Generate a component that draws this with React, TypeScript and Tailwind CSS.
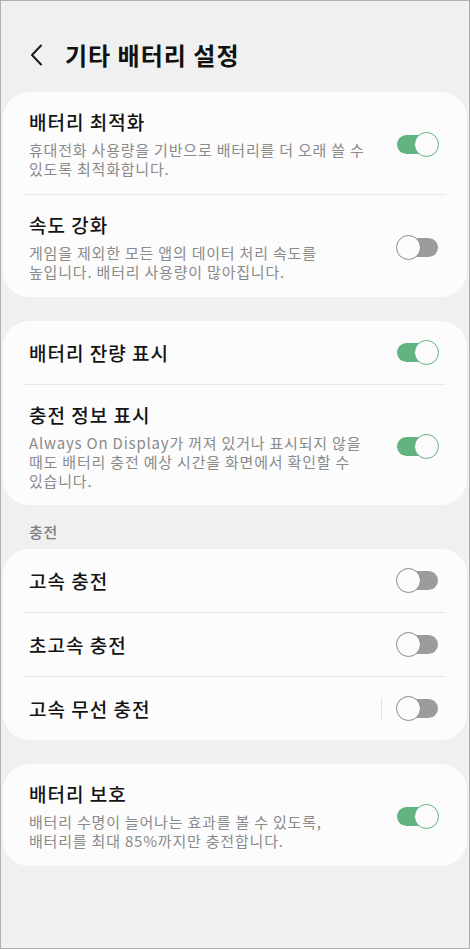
import React from "react";

const FONT = { fontFamily: '"Noto Sans CJK KR", "Noto Sans", sans-serif' };

const Toggle: React.FC<{ on: boolean }> = ({ on }) => (
  <div className="relative w-[43px] h-[25px] shrink-0">
    <div
      className={`absolute top-[3px] bottom-[3px] left-[1px] right-[1px] rounded-full ${
        on ? "bg-[#63b37f]" : "bg-[#9c9c9c]"
      }`}
    />
    <div
      className={`absolute top-0 w-[25px] h-[25px] rounded-full bg-[#fbfbfb] border-[1.5px] ${
        on ? "right-0 border-[#63b37f]" : "left-0 border-[#8a8a8a]"
      }`}
    />
  </div>
);

const Divider = () => <div className="mx-[21px] h-px bg-[#e8e8e8]" />;

const titleCls = "text-[19px] leading-[24px] tracking-[1px] font-medium text-[#141414]";

const Row: React.FC<{ title: string; desc?: string; on: boolean; sep?: boolean; tight?: boolean }> = ({
  title,
  desc,
  on,
  sep,
  tight,
}) => {
  if (!desc) {
    return (
      <div className="flex items-center h-[63px] pl-[26px] pr-[28px]">
        <div className={`flex-1 ${titleCls}`}>{title}</div>
        {sep && <div className="w-px h-[22px] bg-[#e2e2e2] mr-[14px]" />}
        <Toggle on={on} />
      </div>
    );
  }
  return (
    <div className={`flex items-center pt-[18px] pl-[26px] pr-[28px] ${tight ? "pb-[15px]" : "pb-[16px]"}`}>
      <div className="flex-1 min-w-0 pr-[22px]">
        <div className={titleCls}>{title}</div>
        <div className="mt-[6px] text-[15px] leading-[19px] tracking-[0.8px] text-[#8a8a8a] break-keep">
          {desc}
        </div>
      </div>
      <Toggle on={on} />
    </div>
  );
};

const Card: React.FC<{ children: React.ReactNode }> = ({ children }) => (
  <div className="mx-[2px] rounded-[26px] bg-[#fcfcfc]">{children}</div>
);

export default function App() {
  return (
    <div
      className="w-[470px] h-[949px] border border-[#b0b0b0] bg-[#f0f0f0] overflow-hidden"
      style={FONT}
    >
      {/* header */}
      <div className="flex items-center h-[91px] pt-[16px] pl-[28px]">
        <svg width="16" height="22" viewBox="0 0 16 22" className="shrink-0">
          <path d="M12 1.5 L3 11 L12 20.5" fill="none" stroke="#1a1a1a" strokeWidth="2" strokeLinecap="round" strokeLinejoin="round" />
        </svg>
        <h1 className="ml-[20px] text-[24px] leading-[30px] tracking-[1px] font-bold text-[#111]">기타 배터리 설정</h1>
      </div>

      <Card>
        <Row
          title="배터리 최적화"
          desc="휴대전화 사용량을 기반으로 배터리를 더 오래 쓸 수 있도록 최적화합니다."
          on
        />
        <Divider />
        <Row
          title="속도 강화"
          desc="게임을 제외한 모든 앱의 데이터 처리 속도를 높입니다. 배터리 사용량이 많아집니다."
          on={false}
        />
      </Card>

      <div className="h-[24px]" />

      <Card>
        <Row title="배터리 잔량 표시" on />
        <Divider />
        <Row
          title="충전 정보 표시"
          desc="Always On Display가 꺼져 있거나 표시되지 않을 때도 배터리 충전 예상 시간을 화면에서 확인할 수 있습니다."
          on
          tight
        />
      </Card>

      <div className="pt-[17px] pb-[7px] pl-[28px] text-[15px] leading-[20px] tracking-[0.8px] font-medium text-[#7e7e7e]">
        충전
      </div>

      <Card>
        <Row title="고속 충전" on={false} />
        <Divider />
        <Row title="초고속 충전" on={false} />
        <Divider />
        <Row title="고속 무선 충전" on={false} sep />
      </Card>

      <div className="h-[24px]" />

      <Card>
        <Row
          title="배터리 보호"
          desc="배터리 수명이 늘어나는 효과를 볼 수 있도록, 배터리를 최대 85%까지만 충전합니다."
          on
        />
      </Card>
    </div>
  );
}
